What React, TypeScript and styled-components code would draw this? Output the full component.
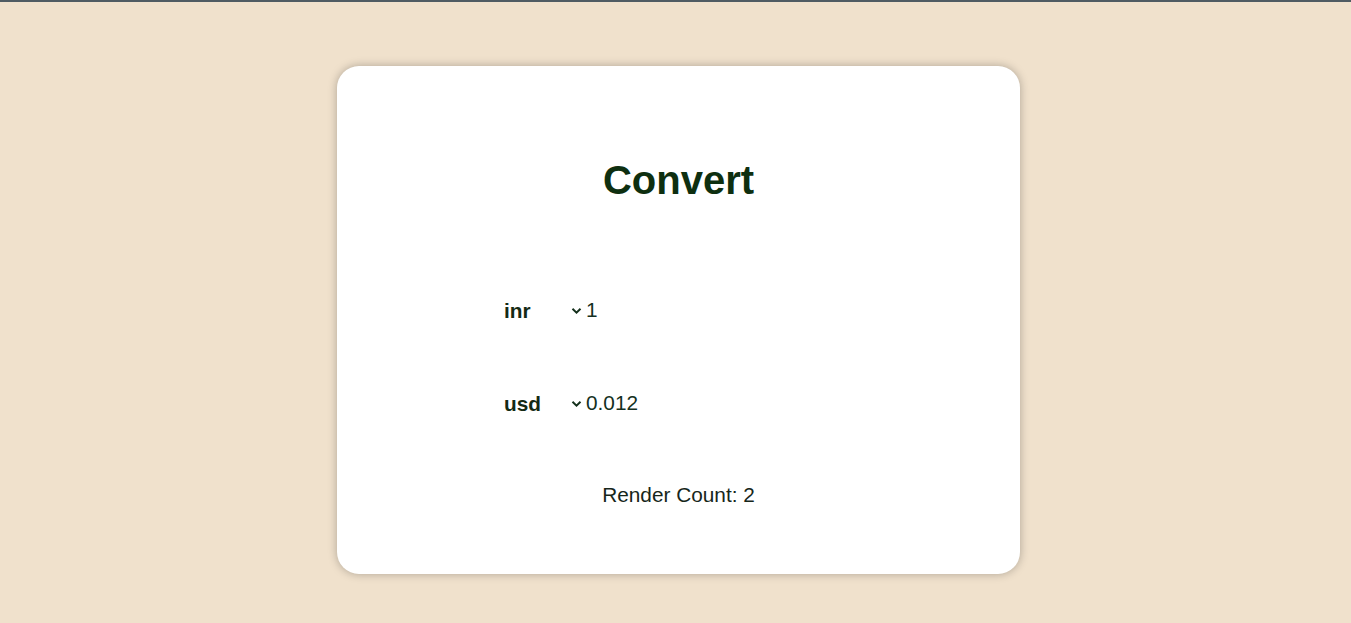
import React, { useState, useRef } from "react";
import styled, { createGlobalStyle } from "styled-components";

const Global = createGlobalStyle`
  html, body { margin: 0; padding: 0; }
  body {
    background: #f0e1cc;
    border-top: 2px solid #4f5b62;
    font-family: "Liberation Sans", Arial, sans-serif;
    min-height: 621px;
  }
`;

const Page = styled.div`
  display: flex;
  justify-content: center;
  padding: 64px 0 0 6px;
`;

const Card = styled.div`
  width: 683px;
  height: 508px;
  box-sizing: border-box;
  background: #ffffff;
  border-radius: 22px;
  box-shadow: 0 0 10px rgba(0, 0, 0, 0.28);
  padding: 91px 0 0 167px;
  display: flex;
  flex-direction: column;
`;

const Title = styled.h1`
  margin: 0 0 92px -167px;
  font-size: 40px;
  line-height: 46px;
  font-weight: 700;
  color: #0e2f10;
  text-align: center;
`;

const Row = styled.div<{ $gap: number }>`
  display: flex;
  align-items: center;
  height: 30px;
  margin-bottom: ${(p) => p.$gap}px;
`;

const SelectWrap = styled.div`
  position: relative;
  display: flex;
  align-items: center;
  width: 82px;
`;

const Select = styled.select`
  appearance: none;
  -webkit-appearance: none;
  border: none;
  background: transparent;
  outline: none;
  padding: 0;
  margin: 0;
  width: 82px;
  font-family: "Liberation Sans", Arial, sans-serif;
  font-size: 20.8px;
  font-weight: 700;
  color: #142a14;
`;

const Chevron = styled.svg`
  position: absolute;
  left: 67px;
  top: 8px;
  pointer-events: none;
`;

const Amount = styled.input`
  border: none;
  outline: none;
  padding: 0;
  margin: 0;
  width: 200px;
  background: transparent;
  font-family: "Liberation Sans", Arial, sans-serif;
  font-size: 20.8px;
  color: #143022;
`;

const Count = styled.p`
  margin: 0 0 0 -167px;
  text-align: center;
  font-size: 20.8px;
  line-height: 30px;
  color: #16261a;
`;

const rates: Record<string, number> = { inr: 1, usd: 0.012, eur: 0.011 };

function CurrencyRow({
  cur,
  value,
  gap,
  onCur,
}: {
  cur: string;
  value: string;
  gap: number;
  onCur: (c: string) => void;
}) {
  return (
    <Row $gap={gap}>
      <SelectWrap>
        <Select value={cur} onChange={(e) => onCur(e.target.value)}>
          {Object.keys(rates).map((k) => (
            <option key={k} value={k}>
              {k}
            </option>
          ))}
        </Select>
        <Chevron width="11" height="8" viewBox="0 0 11 8">
          <path d="M1.5 1.8 L5.5 5.6 L9.5 1.8" fill="none" stroke="#14301c" strokeWidth="2" />
        </Chevron>
      </SelectWrap>
      <Amount value={value} readOnly />
    </Row>
  );
}

export default function App() {
  const [from, setFrom] = useState("inr");
  const [to, setTo] = useState("usd");
  const renders = useRef(1);
  const amount = 1;
  const result = (amount * rates[to]) / rates[from];
  return (
    <>
      <Global />
      <Page>
        <Card>
          <Title>Convert</Title>
          <CurrencyRow cur={from} value={String(amount)} gap={63} onCur={setFrom} />
          <CurrencyRow cur={to} value={String(Number(result.toFixed(3)))} gap={62} onCur={setTo} />
          <Count>Render Count: {renders.current + 1}</Count>
        </Card>
      </Page>
    </>
  );
}
